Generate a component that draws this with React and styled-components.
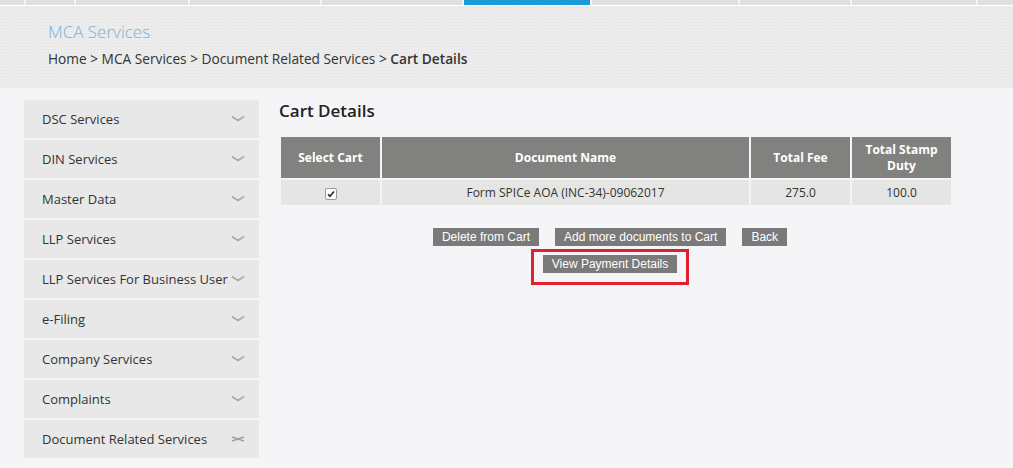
import React from 'react'
import styled, { createGlobalStyle } from 'styled-components'

const GlobalStyle = createGlobalStyle`
  html, body {
    margin: 0;
    padding: 0;
    background: #f5f5f7;
    font-family: "Open Sans", "Noto Sans", sans-serif;
    color: #333;
  }
`

const tabs = [24, 48, 112, 130, 140, 126, 146, 110, 124, 40]
const ACTIVE = 5

const sideItems = [
  'DSC Services',
  'DIN Services',
  'Master Data',
  'LLP Services',
  'LLP Services For Business User',
  'e-Filing',
  'Company Services',
  'Complaints',
  'Document Related Services',
]

const TopBar = styled.div`
  display: flex;
  gap: 2px;
  height: 5px;
  border-bottom: 1px solid #fff;
`

const Tab = styled.div`
  height: 5px;
  flex: 0 0 ${props => props.w}px;
  background: ${props => (props.active ? '#1a9ad6' : '#e0e0e0')};
`

const Header = styled.div`
  height: 82px;
  background-color: #ececec;
  background-image: radial-gradient(#e2e2e2 0.6px, transparent 0.8px);
  background-size: 3px 3px;
  padding-left: 48px;
  box-sizing: border-box;
  padding-top: 15px;
`

const Title = styled.div`
  font-size: 17px;
  font-weight: 300;
  color: #7db1d6;
  line-height: 22px;
`

const Crumbs = styled.div`
  margin-top: 7px;
  font-size: 13.7px;
  line-height: 18px;
  color: #333;

  b {
    font-weight: 600;
  }
`

const Body = styled.div`
  display: flex;
  padding: 12px 0 0 24px;
  gap: 20px;
`

const Sidebar = styled.div`
  width: 235px;
  display: flex;
  flex-direction: column;
  gap: 2px;
`

const SideItem = styled.div`
  height: 38px;
  background: #e8e8e8;
  display: flex;
  align-items: center;
  justify-content: space-between;
  padding: 0 14px 0 18px;
  font-size: 13px;
  color: #333;
  white-space: nowrap;
`

const Chevron = styled.svg`
  flex: 0 0 auto;
  width: 14px;
  height: 8px;
`

const Main = styled.div`
  flex: 1;
`

const Heading = styled.h2`
  margin: 0 0 13px 0;
  font-size: 17px;
  font-weight: 600;
  color: #222;
  line-height: 22px;
`

const Table = styled.table`
  border-collapse: separate;
  border-spacing: 2px;
  font-size: 12px;
`

const Th = styled.th`
  background: #81817f;
  color: #fff;
  font-weight: 700;
  height: 41px;
  width: ${props => props.w}px;
  padding: 0 6px;
  box-sizing: border-box;
  line-height: 16px;
`

const Td = styled.td`
  background: #e5e5e4;
  height: 25px;
  text-align: center;
  font-size: 12px;
  color: #333;
  padding: 0;
`

const Check = styled.span`
  display: inline-flex;
  width: 10px;
  height: 10px;
  border: 1px solid #999;
  background: #fff;
  align-items: center;
  justify-content: center;
  vertical-align: middle;
  border-radius: 2px;
`

const Actions = styled.div`
  width: 662px;
  margin-top: 21px;
  display: flex;
  flex-direction: column;
  align-items: center;
`

const ButtonRow = styled.div`
  display: flex;
  gap: 16px;
`

const Button = styled.button`
  display: block;
  background: #7a7a7a;
  color: #fff;
  border: none;
  font-family: "Liberation Sans", Arial, sans-serif;
  font-size: 12px;
  height: 18px;
  padding: 0 9px;
  line-height: 18px;
  cursor: pointer;
`

const Highlight = styled.div`
  display: flex;
  margin-top: 3px;
  border: 3px solid #e0202e;
  padding: 3px 9px 9px 9px;
`

const ChevronDown = () => (
  <Chevron viewBox="0 0 14 8">
    <path d="M1 1.5 L7 5.5 L13 1.5" fill="none" stroke="#a9a9a9" strokeWidth="1.8" />
  </Chevron>
)

const ChevronOpen = () => (
  <Chevron viewBox="0 0 14 8">
    <path d="M1 2 L7 4 L13 2 M1 6 L7 4 L13 6" fill="none" stroke="#a0a0a0" strokeWidth="1.6" />
  </Chevron>
)

export default class App extends React.Component {
  render() {
    return (
      <>
        <GlobalStyle />
        <TopBar>
          {tabs.map((w, i) => (
            <Tab key={i} w={w} active={i === ACTIVE} />
          ))}
        </TopBar>
        <Header>
          <Title>MCA Services</Title>
          <Crumbs>
            Home &gt; MCA Services &gt; Document Related Services &gt; <b>Cart Details</b>
          </Crumbs>
        </Header>
        <Body>
          <Sidebar>
            {sideItems.map((name, i) => (
              <SideItem key={name}>
                {name}
                {i === sideItems.length - 1 ? <ChevronOpen /> : <ChevronDown />}
              </SideItem>
            ))}
          </Sidebar>
          <Main>
            <Heading>Cart Details</Heading>
            <Table>
              <thead>
                <tr>
                  <Th w={99}>Select Cart</Th>
                  <Th w={367}>Document Name</Th>
                  <Th w={99}>Total Fee</Th>
                  <Th w={99}>Total Stamp Duty</Th>
                </tr>
              </thead>
              <tbody>
                <tr>
                  <Td>
                    <Check>
                      <svg width="8" height="8" viewBox="0 0 8 8">
                        <path d="M1 4.2 L3 6.3 L7 1.5" fill="none" stroke="#222" strokeWidth="1.5" />
                      </svg>
                    </Check>
                  </Td>
                  <Td>Form SPICe AOA (INC-34)-09062017</Td>
                  <Td>275.0</Td>
                  <Td>100.0</Td>
                </tr>
              </tbody>
            </Table>
            <Actions>
              <ButtonRow>
                <Button>Delete from Cart</Button>
                <Button>Add more documents to Cart</Button>
                <Button>Back</Button>
              </ButtonRow>
              <Highlight>
                <Button>View Payment Details</Button>
              </Highlight>
            </Actions>
          </Main>
        </Body>
      </>
    )
  }
}
